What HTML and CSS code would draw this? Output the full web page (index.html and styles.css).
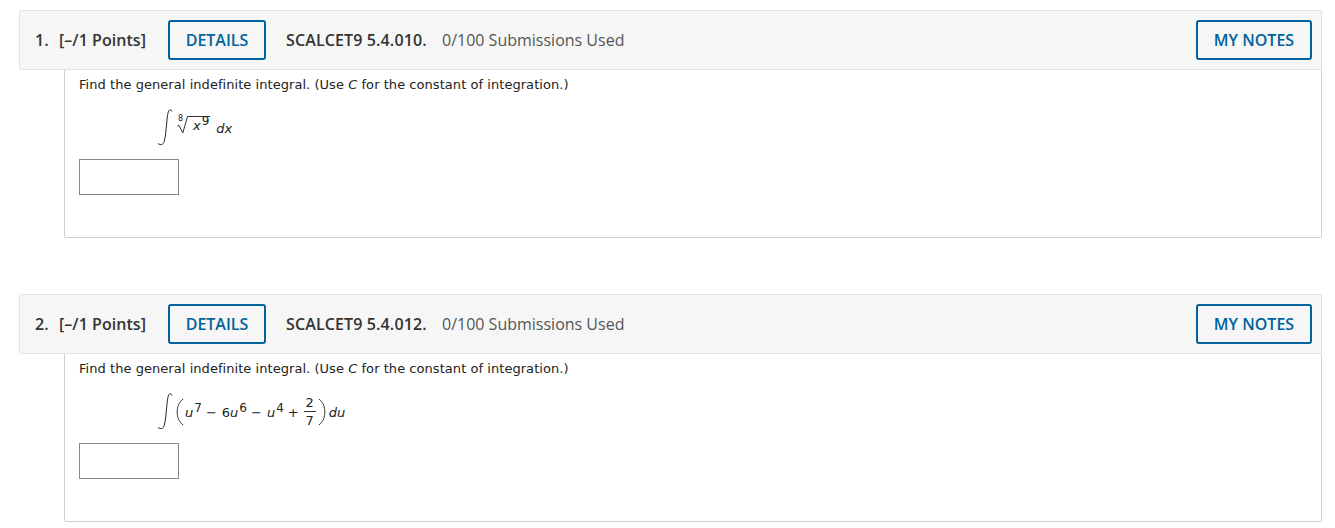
FILE: index.html
```html
<!DOCTYPE html>
<html lang="en">
<head>
<meta charset="utf-8">
<title>Questions</title>
<link rel="stylesheet" href="styles.css">
</head>
<body>
<section class="question">
  <header class="qhead">
    <span class="qnum">1.</span>
    <span class="qpoints">[&#8211;/1 Points]</span>
    <button class="btn details">DETAILS</button>
    <span class="qcode">SCALCET9 5.4.010.</span>
    <span class="qsubs">0/100 Submissions Used</span>
    <button class="btn notes">MY NOTES</button>
  </header>
  <div class="qbody">
    <p class="prompt">Find the general indefinite integral. (Use <i>C</i> for the constant of integration.)</p>
    <div class="math">
      <svg class="integral" width="16" height="38" viewBox="0 0 16 38"><path d="M15 3.5C14.200 1.500 12.700 1.200 11.800 2.800 10.600 5 10.200 10 9.600 16 9 22 8.500 29 7.200 33.500 6.300 36.700 3.500 37.500 1 35.500" fill="none" stroke="#222" stroke-width="1"/></svg>
      <span class="root">
        <span class="rootidx">8</span>
        <svg class="radical" width="12" height="18" viewBox="0 0 12 18"><path d="M0.500 10 2 9.300 5.800 17 10.500 0.500H12" fill="none" stroke="#333" stroke-width="1"/></svg>
        <span class="radicand"><i>x</i><span class="sup">9</span></span>
      </span>
      <i class="dvar first">dx</i>
    </div>
    <input class="answer" type="text" aria-label="Answer 1">
  </div>
</section>
<section class="question second">
  <header class="qhead">
    <span class="qnum">2.</span>
    <span class="qpoints">[&#8211;/1 Points]</span>
    <button class="btn details">DETAILS</button>
    <span class="qcode">SCALCET9 5.4.012.</span>
    <span class="qsubs">0/100 Submissions Used</span>
    <button class="btn notes">MY NOTES</button>
  </header>
  <div class="qbody">
    <p class="prompt">Find the general indefinite integral. (Use <i>C</i> for the constant of integration.)</p>
    <div class="math">
      <svg class="integral" width="16" height="38" viewBox="0 0 16 38"><path d="M15 3.5C14.200 1.500 12.700 1.200 11.800 2.800 10.600 5 10.200 10 9.600 16 9 22 8.500 29 7.200 33.500 6.300 36.700 3.500 37.500 1 35.500" fill="none" stroke="#222" stroke-width="1"/></svg>
      <svg class="paren open" width="8" height="30" viewBox="0 0 8 30"><path d="M7 3C2.500 7 1.200 11 1.200 16S2.500 25 7 29" fill="none" stroke="#333" stroke-width="1"/></svg>
      <span class="term"><i>u</i><span class="sup">7</span></span>
      <span class="op">&#8722;</span>
      <span class="term">6<i>u</i><span class="sup">6</span></span>
      <span class="op">&#8722;</span>
      <span class="term"><i>u</i><span class="sup">4</span></span>
      <span class="op">+</span>
      <span class="frac"><span class="num">2</span><span class="den">7</span></span>
      <svg class="paren close" width="8" height="30" viewBox="0 0 8 30"><path d="M1 3C5.500 7 6.800 11 6.800 16S5.500 25 1 29" fill="none" stroke="#333" stroke-width="1"/></svg>
      <i class="dvar">du</i>
    </div>
    <input class="answer" type="text" aria-label="Answer 2">
  </div>
</section>
</body>
</html>
```
FILE: styles.css
```css
* { box-sizing: border-box; }
html, body { margin: 0; padding: 0; background: #fff; }
body { padding: 10px 13px 0 19px; color: #333; font-family: "Open Sans", sans-serif; }
.question { height: 228px; }
.second { margin-top: 56px; }
.qhead {
  display: flex;
  align-items: center;
  height: 60px;
  padding: 0 9px 0 15px;
  background: #f6f6f6;
  border: 1px solid #e2e2e2;
  border-radius: 2px;
  font-size: 16px;
}
.qnum { font-weight: 600; font-size: 16px; color: #333; width: 24px; }
.qpoints { font-weight: 600; font-size: 16px; color: #333; width: 109px; letter-spacing: 0.05px; }
.btn {
  height: 40px;
  background: transparent;
  border: 2px solid #00639c;
  border-radius: 3px;
  color: #00639c;
  font-family: "Open Sans", sans-serif;
  font-size: 16px;
  font-weight: 600;
  padding: 0;
}
.details { width: 98px; margin-right: 20px; }
.notes { width: 116px; margin-left: auto; }
.qcode { font-weight: 600; color: #333; width: 156px; letter-spacing: 0.13px; }
.qsubs { color: #555; }
.qbody {
  height: 168px;
  margin-left: 45px;
  padding: 6px 14px 0;
  background: #fff;
  border: 1px solid #cfcfcf;
  border-top: 0;
  border-radius: 0 0 2px 2px;
}
.prompt {
  margin: 0;
  font-family: "DejaVu Sans", Verdana, sans-serif;
  font-size: 13px;
  line-height: 18px;
  color: #222;
  letter-spacing: 0.05px;
}
.math {
  display: flex;
  align-items: center;
  height: 38px;
  margin: 14px 0 0 78px;
  font-family: "DejaVu Sans", Verdana, sans-serif;
  font-size: 13px;
  color: #222;
  line-height: 16px;
}
.integral { flex: none; }
.root { display: flex; position: relative; height: 18px; margin: -4px 0 0 4px; }
.rootidx { position: absolute; left: 1px; top: -2px; font-size: 8px; line-height: 10px; }
.radical { flex: none; }
.radicand { height: 18px; padding: 0 1px 0 4px; border-top: 1px solid #333; line-height: 18px; white-space: nowrap; }
.sup { font-size: 12px; position: relative; top: -5px; margin-left: 1px; font-style: normal; }
.dvar { margin-top: 3px; }
.first { margin-left: 6px; }
.paren { flex: none; }
.open { margin: 0 1px 0 3px; }
.close { margin-left: 2px; margin-right: 3px; }
.term { white-space: nowrap; margin-top: 3px; }
.op { margin: 3px 5px 0 4px; }
.frac { display: flex; flex-direction: column; align-items: center; width: 12px; margin-top: 2px; line-height: 14px; }
.num { border-bottom: 1px solid #333; width: 100%; text-align: center; padding-bottom: 1px; }
.den { width: 100%; text-align: center; padding-top: 2px; }
.answer {
  display: block;
  width: 100px;
  height: 36px;
  margin-top: 13px;
  background: #fff;
  border: 1px solid #8a8a8a;
  border-radius: 0;
  padding: 0;
}
```
